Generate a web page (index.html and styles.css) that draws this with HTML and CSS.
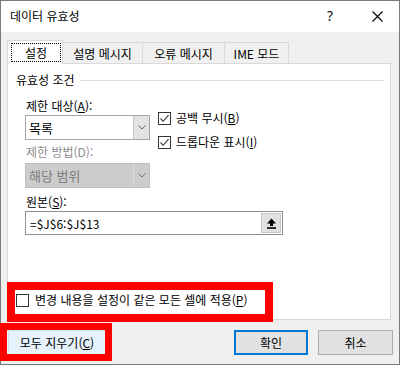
FILE: index.html
```html
<!DOCTYPE html>
<html lang="ko">
<head>
<meta charset="utf-8">
<title>데이터 유효성</title>
<link rel="stylesheet" href="styles.css">
</head>
<body>
<div class="window">
  <div class="titlebar">
    <span class="title">데이터 유효성</span>
    <span class="help">?</span>
    <span class="close"><svg width="11" height="11" viewBox="0 0 11 11"><path d="M0.5 0.5 L10.5 10.5 M10.5 0.5 L0.5 10.5" stroke="#000" stroke-width="1.1" fill="none"/></svg></span>
  </div>
  <div class="body">
    <div class="tabs">
      <div class="tab selected"><span class="focus">설정</span></div>
      <div class="tab t2">설명 메시지</div>
      <div class="tab t3">오류 메시지</div>
      <div class="tab t4">IME 모드</div>
    </div>
    <div class="panel">
      <div class="group-title"><span>유효성 조건</span><span class="rule"></span></div>
      <div class="form">
        <div class="top-row">
          <div class="col-left">
            <div class="label">제한 대상(<u>A</u>):</div>
            <div class="combo">
              <span class="combo-text">목록</span>
              <span class="combo-btn"><svg width="8" height="5" viewBox="0 0 8 5"><path d="M0.5 0.5 L4 4 L7.5 0.5" stroke="#606060" stroke-width="1" fill="none"/></svg></span>
            </div>
            <div class="label disabled">제한 방법(D):</div>
            <div class="combo disabled">
              <span class="combo-text">해당 범위</span>
              <span class="combo-btn"><svg width="8" height="5" viewBox="0 0 8 5"><path d="M0.5 0.5 L4 4 L7.5 0.5" stroke="#707070" stroke-width="1" fill="none"/></svg></span>
            </div>
          </div>
          <div class="col-right">
            <div class="check"><span class="box"><svg width="11" height="11" viewBox="0 0 11 11"><path d="M1.5 5.5 L4.2 8.3 L9.5 2.2" stroke="#333" stroke-width="1.1" fill="none"/></svg></span><span>공백 무시(<u>B</u>)</span></div>
            <div class="check second"><span class="box"><svg width="11" height="11" viewBox="0 0 11 11"><path d="M1.5 5.5 L4.2 8.3 L9.5 2.2" stroke="#333" stroke-width="1.1" fill="none"/></svg></span><span>드롭다운 표시(<u>I</u>)</span></div>
          </div>
        </div>
        <div class="label source">원본(<u>S</u>):</div>
        <div class="input">
          <span class="input-text">=$J$6:$J$13</span>
          <span class="ref-btn"><svg width="11" height="11" viewBox="0 0 11 11"><path d="M5.5 0.5 L10 5.5 L7 5.5 L7 8 L4 8 L4 5.5 L1 5.5 Z" fill="#000"/><rect x="1" y="9.2" width="9" height="1.6" fill="#000"/></svg></span>
        </div>
      </div>
      <div class="check apply"><span class="box"></span><span>변경 내용을 설정이 같은 모든 셀에 적용(<u>P</u>)</span></div>
    </div>
    <div class="buttons">
      <div class="btn clear">모두 지우기(<u>C</u>)</div>
      <div class="btn ok">확인</div>
      <div class="btn cancel">취소</div>
    </div>
  </div>
  <div class="mark mark-apply"></div>
  <div class="mark mark-clear"></div>
</div>
</body>
</html>
```

FILE: styles.css
```css
* { box-sizing: border-box; }
html, body { margin: 0; padding: 0; }
body {
  font-family: "Noto Sans CJK KR", "Noto Sans", sans-serif;
  font-size: 12px;
  color: #000;
  background: #fff;
}
u { text-decoration: underline; text-underline-offset: 1px; }

.window {
  position: relative;
  width: 400px;
  height: 365px;
  border: 1px solid #7a7a7a;
  display: flex;
  flex-direction: column;
  background: #f0f0f0;
}

.titlebar {
  height: 31px;
  background: #fff;
  display: flex;
  align-items: center;
  padding: 0 16px 1px 9px;
  line-height: 16px;
}
.title { flex: 1; }
.help {
  font-family: "Noto Sans", sans-serif;
  font-size: 14px;
  width: 12px;
  text-align: center;
  margin-right: 36px;
  color: #111;
}
.close { width: 11px; height: 11px; display: flex; }

.body {
  flex: 1;
  display: flex;
  flex-direction: column;
  padding: 8px 6px 0 6px;
}

.tabs {
  display: flex;
  align-items: flex-end;
  height: 23px;
  position: relative;
  z-index: 1;
}
.tab {
  height: 21px;
  border-top: 1px solid #d9d9d9;
  border-right: 1px solid #d9d9d9;
  background: #f0f0f0;
  display: flex;
  align-items: center;
  justify-content: center;
  line-height: 16px;
  padding-top: 1px;
}
.tab.selected {
  width: 56px;
  height: 24px;
  margin-bottom: -1px;
  background: #fff;
  border-left: 1px solid #d9d9d9;
  padding: 2px 1px 2px 3px;
  align-items: stretch;
}
.focus {
  flex: 1;
  border: 1px dotted #000;
  display: flex;
  align-items: center;
  justify-content: center;
}
.t2 { width: 80px; }
.t3 { width: 82px; }
.t4 { width: 64px; }

.panel {
  height: 257px;
  width: 384px;
  background: #fff;
  border: 1px solid #d9d9d9;
  display: flex;
  flex-direction: column;
}

.group-title {
  margin-top: 8px;
  height: 16px;
  line-height: 16px;
  padding-left: 8px;
  display: flex;
  align-items: center;
}
.rule {
  flex: 1;
  height: 1px;
  background: #dcdcdc;
  margin: 1px 6px 0 5px;
}

.form { padding-left: 17px; }
.top-row { display: flex; }
.col-left { width: 125px; }
.label {
  height: 16px;
  line-height: 16px;
  padding-left: 1px;
  margin-top: 10px;
}
.label.disabled { color: #8d8d8d; margin-top: 4px; }
.label.source { margin-top: 6px; }

.combo {
  height: 25px;
  margin-top: 1px;
  border: 1px solid #a5a5a5;
  background: #fff;
  display: flex;
}
.combo.disabled {
  margin-top: 3px;
  background: #cccccc;
  border-color: #bfbfbf;
  color: #7d7d7d;
}
.combo-text {
  flex: 1;
  padding-left: 3px;
  display: flex;
  align-items: center;
  font-size: 13px;
}
.combo-btn {
  width: 16px;
  border-left: 1px solid #c4c4c4;
  background: #e3e3e3;
  display: flex;
  align-items: center;
  justify-content: center;
}
.combo.disabled .combo-btn {
  background: #cccccc;
  border-left-color: #dedede;
}

.col-right {
  margin-left: 8px;
  padding-top: 22px;
}
.check {
  display: flex;
  align-items: center;
  gap: 5px;
  height: 16px;
  line-height: 16px;
}
.check.second { margin-top: 8px; }
.box {
  width: 13px;
  height: 13px;
  border: 1px solid #333;
  background: #fff;
  display: flex;
  align-items: center;
  justify-content: center;
  flex: none;
}

.input {
  width: 258px;
  height: 24px;
  margin-top: 1px;
  border: 1px solid #8f8f8f;
  background: #fff;
  display: flex;
  padding: 1px;
}
.input-text {
  flex: 1;
  padding-left: 3px;
  display: flex;
  align-items: center;
  font-size: 12px;
}
.ref-btn {
  width: 20px;
  background: #e1e1e1;
  border: 1px solid #c8c8c8;
  display: flex;
  align-items: center;
  justify-content: center;
}

.check.apply {
  margin-top: auto;
  margin-bottom: 11px;
  margin-left: 8px;
  gap: 6px;
}

.buttons {
  display: flex;
  margin-top: 10px;
  padding-right: 0;
}
.btn {
  height: 25px;
  display: flex;
  align-items: center;
  justify-content: center;
  background: #e1e1e1;
  border: 1px solid #adadad;
  line-height: 16px;
}
.btn.clear {
  width: 98px;
  background: #e5f1fb;
  border-color: #cce4f7;
  margin-left: 1px;
}
.btn.ok {
  width: 74px;
  margin-left: auto;
  border: 2px solid #0078d7;
}
.btn.cancel {
  width: 75px;
  margin-left: 10px;
}

.mark {
  position: absolute;
  border: 8px solid #fe0000;
  z-index: 5;
}
.mark-apply {
  left: 6px;
  top: 281px;
  width: 266px;
  height: 40px;
}
.mark-clear {
  left: -1px;
  top: 322px;
  width: 112px;
  height: 38px;
  border-width: 7px;
}
```
